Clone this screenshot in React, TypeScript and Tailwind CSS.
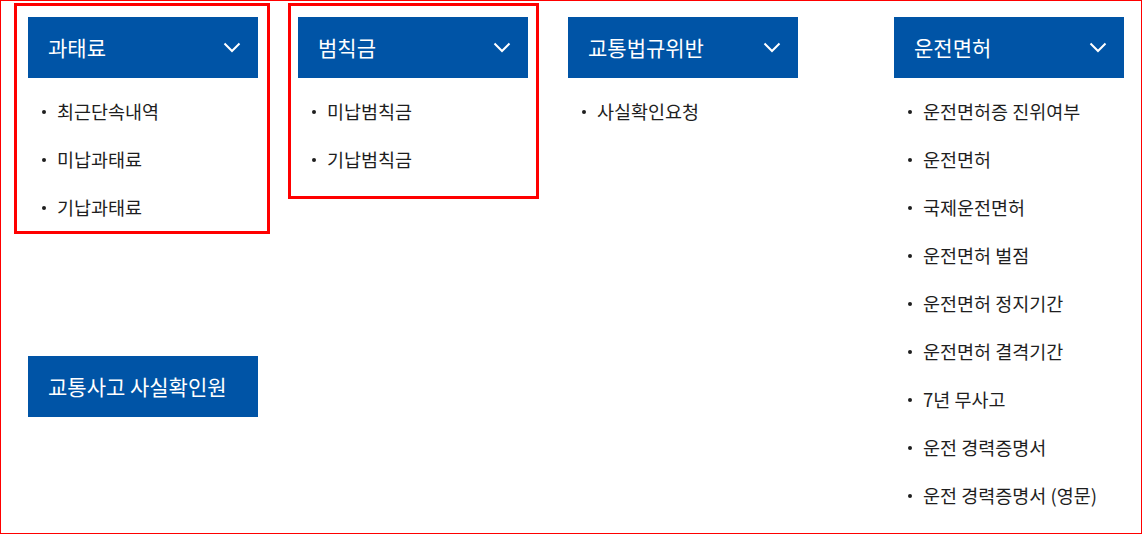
import React from 'react';

const COLUMNS = [
  { title: '과태료', items: ['최근단속내역', '미납과태료', '기납과태료'] },
  { title: '범칙금', items: ['미납범칙금', '기납범칙금'] },
  { title: '교통법규위반', items: ['사실확인요청'] },
];

const LICENSE = {
  title: '운전면허',
  items: [
    '운전면허증 진위여부',
    '운전면허',
    '국제운전면허',
    '운전면허 벌점',
    '운전면허 정지기간',
    '운전면허 결격기간',
    '7년 무사고',
    '운전 경력증명서',
    '운전 경력증명서 (영문)',
  ],
};

function Chevron() {
  return (
    <svg width="18" height="11" viewBox="0 0 18 11" fill="none" className="shrink-0">
      <path d="M1.5 1.5 L9 9 L16.5 1.5" stroke="white" strokeWidth="2" />
    </svg>
  );
}

function Column({ title, items }: { title: string; items: string[] }) {
  return (
    <div className="w-[230px]">
      <div className="h-[61px] bg-[#0054a6] flex items-center justify-between pl-5 pr-[17px] text-white text-[21px]">
        <span>{title}</span>
        <Chevron />
      </div>
      <ul className="mt-[10px]">
        {items.map((item) => (
          <li key={item} className="h-12 flex items-center pl-[14px] text-[18.5px] text-[#1e1e1e]">
            <span className="w-[4px] h-[4px] rounded-full bg-[#1e1e1e] mr-[11px] shrink-0" />
            <span>{item}</span>
          </li>
        ))}
      </ul>
    </div>
  );
}

export default function App() {
  return (
    <div
      className="relative w-[1142px] h-[534px] bg-white border border-[#ff0000] overflow-hidden"
      style={{ fontFamily: '"Noto Sans CJK KR", "Noto Sans", sans-serif' }}
    >
      <div className="flex items-start pt-4 pl-[27px]">
        <div className="flex flex-col">
          <div className="flex items-start gap-10">
            {COLUMNS.map((c) => (
              <Column key={c.title} title={c.title} items={c.items} />
            ))}
          </div>
          <div className="mt-[124px] w-[230px] h-[61px] bg-[#0054a6] flex items-center pl-5 text-white text-[21px]">
            교통사고 사실확인원
          </div>
        </div>
        <div className="ml-[96px]">
          <Column title={LICENSE.title} items={LICENSE.items} />
        </div>
      </div>

      {/* annotation boxes */}
      <div className="absolute left-[13px] top-[2px] w-[256px] h-[231px] border-[3px] border-[#ff0000]" />
      <div className="absolute left-[287px] top-[2px] w-[251px] h-[196px] border-[3px] border-[#ff0000]" />
    </div>
  );
}
